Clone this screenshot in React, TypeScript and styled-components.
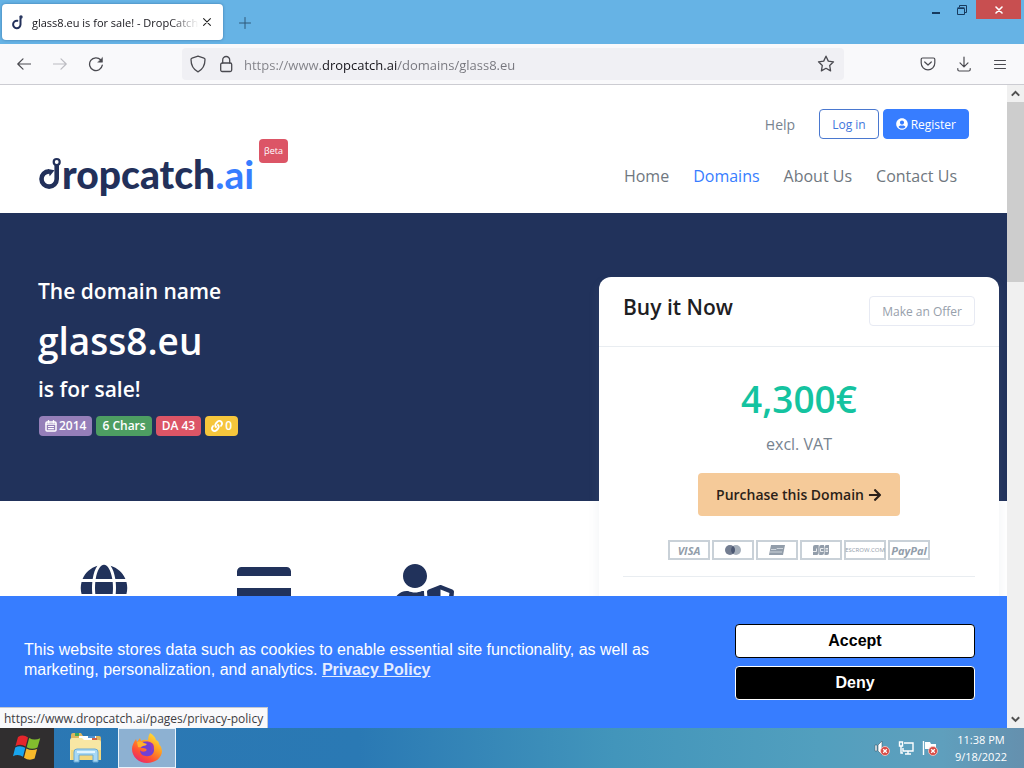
import React from "react";
import styled, { createGlobalStyle } from "styled-components";
import { FaArrowRight, FaCreditCard, FaGlobe, FaLink, FaUserCircle, FaUserShield } from "react-icons/fa";

const GlobalStyle = createGlobalStyle`
  * { box-sizing: border-box; }
  body { margin: 0; font-family: "Open Sans", "Noto Sans", sans-serif; }
  button, input { font: inherit; margin: 0; }
  h1, h2, p { margin: 0; }
`;

const Shell = styled.div`
  display: flex;
  flex-direction: column;
  height: 100vh;
  overflow: hidden;
  background: #fff;
`;

/* ---------- browser chrome ---------- */

const TitleBar = styled.div`
  display: flex;
  align-items: flex-start;
  flex: none;
  height: 44px;
  background: #66b3e5;
`;

const Tab = styled.div`
  display: flex;
  align-items: center;
  width: 221px;
  height: 36px;
  margin: 4px 0 0 2px;
  padding: 0 8px 0 9px;
  border-radius: 4px;
  background: #fff;
  box-shadow: 0 0 3px rgba(0, 40, 90, 0.4);
`;

const TabTitle = styled.span`
  flex: 1;
  min-width: 0;
  margin-left: 7px;
  overflow: hidden;
  white-space: nowrap;
  font-size: 11px;
  color: #15141a;
  mask-image: linear-gradient(90deg, #000 82%, transparent);
`;

const IconButton = styled.button<{ $w?: number; $h?: number; $color?: string }>`
  display: flex;
  align-items: center;
  justify-content: center;
  flex: none;
  width: ${(p) => p.$w ?? 36}px;
  height: ${(p) => p.$h ?? 40}px;
  padding: 0;
  border: 0;
  background: none;
  color: ${(p) => p.$color ?? "#4a4a50"};
`;

const NewTab = styled(IconButton)`
  margin-top: 3px;
`;

const WindowControls = styled.div`
  display: flex;
  margin-left: auto;
  padding-right: 3px;
`;

const CloseWindow = styled(IconButton)`
  margin-left: 1px;
  background: #c84f50;
`;

const Toolbar = styled.div`
  display: flex;
  align-items: center;
  flex: none;
  height: 41px;
  padding: 0 6px;
  border-bottom: 1px solid #ccccd2;
  background: #f9f9fb;
`;

const AddressBar = styled.label`
  display: flex;
  align-items: center;
  flex: 1;
  max-width: 662px;
  height: 32px;
  margin: 0 auto 0 68px;
  padding: 0 8px;
  border-radius: 4px;
  background: #f0f0f4;
  color: #4a4a50;
`;

const AddressInput = styled.input`
  flex: 1;
  min-width: 0;
  margin-left: 8px;
  padding: 2px 0 0;
  border: 0;
  outline: 0;
  font-size: 13px;
  color: #75757c;
  background: linear-gradient(90deg, #808086 77px, #15141a 77px, #15141a 153px, #75757c 153px);
  background-clip: text;
  -webkit-background-clip: text;
  -webkit-text-fill-color: transparent;
`;

const Viewport = styled.div`
  display: flex;
  flex: 1;
  min-height: 0;
`;

const Page = styled.div`
  position: relative;
  flex: 1;
  min-width: 0;
  overflow: hidden;
  background: #fff;
`;

const ScrollTrack = styled.div`
  display: flex;
  flex-direction: column;
  justify-content: space-between;
  flex: none;
  width: 17px;
  background: #f0f0f0;
`;

const ScrollThumb = styled.div`
  height: 180px;
  margin-bottom: auto;
  background: #cdcdcd;
`;

/* ---------- site header ---------- */

const SiteHeader = styled.header`
  display: flex;
  justify-content: space-between;
  height: 128px;
  padding: 24px 38px 0;
`;

const Brand = styled.a`
  display: flex;
  align-items: flex-start;
  padding-top: 30px;
  text-decoration: none;
`;

const HookIcon = styled.svg`
  flex: none;
  margin-top: 18px;
`;

const Wordmark = styled.span`
  display: block;
  margin-top: 11px;
  font: 900 39px/48px Lato, "Open Sans", sans-serif;
  color: #22305a;
`;

const WordmarkSuffix = styled.span`
  font-weight: 700;
  color: #377dff;
`;

const BetaTag = styled.span`
  height: 24px;
  margin-left: 5px;
  padding: 0 5px;
  border-radius: 4px;
  background: #dc5566;
  color: #fff;
  font-size: 9px;
  line-height: 24px;
`;

const HeaderRight = styled.div`
  display: flex;
  flex-direction: column;
  align-items: flex-end;
`;

const AccountRow = styled.div`
  display: flex;
  align-items: center;
  gap: 4px;
`;

const HelpLink = styled.a`
  margin-right: 20px;
  color: #77838f;
  font-size: 14px;
  text-decoration: none;
`;

const SmallButton = styled.button<{ $tone: "outline" | "solid" | "muted" }>`
  display: flex;
  align-items: center;
  gap: 3px;
  height: 30px;
  padding: 0 12px;
  border: 1px solid ${(p) => (p.$tone === "muted" ? "#e7eaf3" : p.$tone === "solid" ? "#377dff" : "#4a78cf")};
  border-radius: 4px;
  background: ${(p) => (p.$tone === "solid" ? "#377dff" : "#fff")};
  color: ${(p) => (p.$tone === "solid" ? "#fff" : p.$tone === "muted" ? "#97a0ab" : "#3f76dc")};
  font-size: 12px;
  white-space: nowrap;
`;

const Nav = styled.nav`
  display: flex;
  gap: 24px;
  padding: 25px 12px 0 0;
`;

const NavLink = styled.a<{ $active?: boolean }>`
  color: ${(p) => (p.$active ? "#377dff" : "#6f7780")};
  font-size: 16px;
  line-height: 24px;
  text-decoration: none;
  white-space: nowrap;
`;

/* ---------- hero ---------- */

const Hero = styled.section`
  display: flex;
  justify-content: space-between;
  align-items: flex-start;
  height: 288px;
  padding: 64px 8px 0 38px;
  background: #21325b;
`;

const Pitch = styled.div`
  color: #fff;
  font-weight: 600;
`;

const PitchLine = styled.p`
  font-size: 21px;
  line-height: 28px;
`;

const DomainName = styled.h1`
  padding: 10px 0 9px;
  font-size: 37px;
  font-weight: 600;
  line-height: 51px;
`;

const Badges = styled.div`
  display: flex;
  gap: 4px;
  margin: 13px 0 0 1px;
`;

const Badge = styled.span<{ $bg: string }>`
  display: flex;
  align-items: center;
  gap: 2px;
  height: 20px;
  padding: 0 6px;
  border-radius: 4px;
  background: ${(p) => p.$bg};
  font-size: 12px;
  line-height: 18px;
  white-space: nowrap;
`;

const Card = styled.section`
  flex: none;
  width: 400px;
  border-radius: 12px;
  background: #fff;
  box-shadow: 0 6px 12px rgba(140, 152, 164, 0.12);
`;

const CardHead = styled.div`
  display: flex;
  justify-content: space-between;
  height: 70px;
  padding: 19px 24px 0;
  border-bottom: 1px solid #e9edf1;
`;

const CardTitle = styled.h2`
  color: #1e2022;
  font-size: 21px;
  font-weight: 600;
  line-height: 22px;
`;

const CardBody = styled.div`
  display: flex;
  flex-direction: column;
  align-items: center;
  height: 400px;
  padding: 26px 24px 0;
`;

const Price = styled.p`
  color: #14c3a0;
  font-size: 37px;
  font-weight: 600;
  line-height: 52px;
`;

const PriceNote = styled.p`
  margin-top: 7px;
  color: #77838f;
  font-size: 16px;
  line-height: 24px;
`;

const PurchaseButton = styled.button`
  display: flex;
  align-items: center;
  gap: 4px;
  height: 43px;
  margin-top: 17px;
  padding: 0 18px;
  border: 0;
  border-radius: 4px;
  background: #f5ca99;
  color: #2b1f18;
  font-size: 14px;
  font-weight: 600;
  white-space: nowrap;
`;

const PaymentRow = styled.div`
  display: flex;
  justify-content: center;
  gap: 2px;
  align-self: stretch;
  margin-top: 24px;
  padding-bottom: 16px;
  border-bottom: 1px solid #e9edf1;
`;

const PaymentMark = styled.span<{ $size?: number; $italic?: boolean; $light?: boolean }>`
  display: flex;
  align-items: center;
  justify-content: center;
  width: 42px;
  height: 20px;
  border: 2px solid #c9d1d8;
  color: #929daa;
  font-size: ${(p) => p.$size ?? 11}px;
  font-weight: ${(p) => (p.$light ? 400 : 700)};
  font-style: ${(p) => (p.$italic ? "italic" : "normal")};
`;

const Features = styled.section`
  display: grid;
  grid-template: 48px / repeat(3, 160px);
  place-items: center;
  padding: 63px 24px 0;
  color: #21325b;
`;

/* ---------- overlays ---------- */

const CookieBanner = styled.aside`
  position: absolute;
  right: 0;
  bottom: 0;
  left: 0;
  display: flex;
  align-items: center;
  justify-content: space-between;
  gap: 32px;
  height: 132px;
  padding: 0 32px 0 24px;
  background: #377dff;
  color: #fff;
  font: 16px/20px "Liberation Sans", Arial, sans-serif;
`;

const CookieText = styled.p`
  max-width: 648px;
  padding-bottom: 4px;
`;

const PolicyLink = styled.a`
  display: inline-block;
  color: #e4ecff;
  font-weight: 700;
`;

const CookieActions = styled.div`
  display: flex;
  flex-direction: column;
  flex: none;
  gap: 8px;
  width: 240px;
`;

const CookieButton = styled.button<{ $dark?: boolean }>`
  height: 34px;
  border: 1px solid ${(p) => (p.$dark ? "#fff" : "#000")};
  border-radius: 4px;
  background: ${(p) => (p.$dark ? "#000" : "#fff")};
  color: ${(p) => (p.$dark ? "#fff" : "#000")};
  font-weight: 700;
`;

const LinkStatus = styled.div`
  position: absolute;
  bottom: 0;
  left: 0;
  height: 21px;
  padding: 0 4px;
  border-top: 1px solid #c4c8d0;
  border-right: 1px solid #c4c8d0;
  background: #f9f9fb;
  color: #3c3c42;
  font-size: 12px;
  line-height: 21px;
  white-space: nowrap;
`;

/* ---------- taskbar ---------- */

const Taskbar = styled.footer`
  display: flex;
  align-items: stretch;
  flex: none;
  height: 40px;
  background: linear-gradient(90deg, #2b77b3 0%, #2a79b4 35%, #4295bb 60%, #529fbe 80%, #5f9fbd 92%, #6590ae 100%);
`;

const TaskButton = styled.button<{ $kind?: "start" | "active" }>`
  display: flex;
  align-items: center;
  justify-content: center;
  width: ${(p) => (p.$kind === "start" ? 54 : p.$kind === "active" ? 58 : 64)}px;
  padding: 0;
  border: ${(p) => (p.$kind === "active" ? "1px solid #e8f3fb" : "0")};
  background: ${(p) => (p.$kind === "start" ? "#302e2f" : p.$kind === "active" ? "#8db1d2" : "none")};
`;

const Tray = styled.div`
  display: flex;
  align-items: center;
  gap: 8px;
  margin-left: auto;
  padding-right: 17px;
`;

const Clock = styled.time`
  margin-left: 9px;
  color: #fff;
  font-size: 11px;
  line-height: 17px;
  text-align: center;
`;

const stroke = { fill: "none", stroke: "currentColor", strokeLinecap: "round", strokeLinejoin: "round" } as const;

const Favicon = () => (
  <svg width="14" height="16" viewBox="0 0 14 16" {...stroke} stroke="#22305a" strokeWidth="2">
    <path d="M9.500 4.500v6a3.700 3.700 0 1 1-3.200-3.700" />
    <circle cx="10" cy="3" r="1" strokeWidth="1.4" />
  </svg>
);

const CalendarLines = () => (
  <svg width="12" height="12" viewBox="0 0 12 12" {...stroke} strokeWidth="1.5">
    <rect x="1" y="2" width="10" height="9" rx="1" />
    <path d="M3.5 .8v2M8.5 .8v2" />
    <path d="M1 4.2h10M3.5 6.5h5M3.5 8.7h5" strokeWidth="1.2" />
  </svg>
);

const Chevron = ({ down }: { down?: boolean }) => (
  <svg width="9" height="7" viewBox="0 0 9 7" fill="none" stroke="#505050" strokeWidth="2">
    <path d={down ? "M.8 1.2l3.7 3.7 3.7-3.7" : "M.8 5.6l3.7-3.7 3.7 3.7"} />
  </svg>
);

const WindowsLogo = () => (
  <svg width="28" height="26" viewBox="0 0 28 26">
    <path fill="#e5262b" d="M5 2q5-3 10 .4L12.600 11.400Q8 8.500 2.500 11z" />
    <path fill="#83bd2e" d="M16.200 3q5 3 11 .3L24.500 12.500q-5.500 2.600-10.800-.3z" />
    <path fill="#18a5ee" d="M2.200 12.500q5-2.600 10.100.3L10 21.700Q5 18.700 0 21.300z" />
    <path fill="#f8ba2b" d="M13.400 13.600q5.300 2.800 10.700.4L21.600 23.500q-5.400 2.600-10.600-.8z" />
  </svg>
);

const FolderIcon = () => (
  <svg width="34" height="32" viewBox="0 0 34 32">
    <path fill="#dcb560" d="M2 3q0-2 2-2h8l2 3h16q2 0 2 2v22H2z" />
    <path fill="#40a858" d="M6 1h4v3H6z" />
    <path fill="#fff" d="M10 4h17v5H10z" />
    <path fill="#4f91cf" d="M19 4h7v2h-7z" />
    <path fill="#cf6247" d="M23 6h5v2h-5z" />
    <path fill="#f8e7a4" d="M1 8q0-2 2-2h10l2 2h15q2 0 2 2v18H1z" />
    <path fill="#f2d77d" d="M2 18h30v10H2z" />
    <path fill="#a7d8f4" stroke="#6aaad5" d="M5 30V20q0-3 3-3h18q3 0 3 3v10h-5v-7H10v7z" />
    <path stroke="#e1f5ff" strokeWidth="2" d="M8 20h18" />
  </svg>
);

const FirefoxIcon = () => (
  <svg width="32" height="32" viewBox="0 0 32 32">
    <defs>
      <linearGradient id="flame" x1="0.85" y1="0.05" x2="0.25" y2="1">
        <stop offset="0" stopColor="#ffe43b" />
        <stop offset="0.4" stopColor="#ff9b22" />
        <stop offset="0.72" stopColor="#ff5035" />
        <stop offset="1" stopColor="#e82770" />
      </linearGradient>
    </defs>
    <path
      fill="url(#flame)"
      d="M19 1q5 3 6 7 3 1 3 4 3 3 3 7c0 7-7 12-15 12S1 25 1 17c0-4 2-7 4-10l1 3 3-4 1 3q3-2 7-1 0-4 2-7z"
    />
    <path fill="#7040d5" d="M11 10c7-2 12 2 12 8 0 4-4 7-8 6-4 0-6-3-6-6 1 2 4 2 6 1 2-2-1-3-4-3-1 0-2-2 1-3z" />
    <path fill="#9d36b9" d="M15 10c6 1 7 7 4 11 3-2 5-6 3-9-2-2-5-3-7-2z" />
    <path fill="#ffb12d" d="M6 10q4-2 7 1l3 1q-1 2-4 2-3 2-5 1z" />
  </svg>
);

const ErrorDot = () => (
  <g>
    <circle cx="11" cy="11" r="4.500" fill="#d94b45" stroke="#f4d3d0" strokeWidth=".8" />
    <path d="M9.200 9.200l3.600 3.600M12.800 9.200l-3.600 3.600" stroke="#fff" strokeWidth="1.300" />
  </g>
);

export default function App() {
  return (
    <Shell>
      <GlobalStyle />
      <TitleBar>
        <Tab>
          <Favicon />
          <TabTitle>glass8.eu is for sale! - DropCatch</TabTitle>
          <IconButton $w={16} $h={24} $color="#222" aria-label="Close tab">
            <svg width="8" height="8" viewBox="0 0 8 8" {...stroke} strokeWidth="1.1">
              <path d="M.6 .6l6.800 6.800M7.400 .6L.6 7.400" />
            </svg>
          </IconButton>
        </Tab>
        <NewTab $w={44} $color="#2e5878" aria-label="New tab">
          <svg width="12" height="12" viewBox="0 0 12 12" {...stroke}>
            <path d="M6 .5v11M.5 6h11" />
          </svg>
        </NewTab>
        <WindowControls>
          <IconButton $w={26} $h={19} aria-label="Minimize">
            <svg width="8" height="12" viewBox="0 0 8 12">
              <path fill="#173a5e" d="M0 8h8v2H0z" />
            </svg>
          </IconButton>
          <IconButton $w={26} $h={19} aria-label="Restore">
            <svg width="10" height="10" viewBox="0 0 10 10" fill="none" stroke="#173a5e">
              <path d="M2.500 2V.500h7v7H8" />
              <path d="M.5 3.500h7v6h-7zM.5 2.800h7" />
            </svg>
          </IconButton>
          <CloseWindow $w={45} $h={19} $color="#fff" aria-label="Close window">
            <svg width="8" height="8" viewBox="0 0 8 8" {...stroke} strokeWidth="1.6">
              <path d="M1 1l6 6M7 1L1 7" />
            </svg>
          </CloseWindow>
        </WindowControls>
      </TitleBar>

      <Toolbar>
        <IconButton aria-label="Back">
          <svg width="14" height="12" viewBox="0 0 14 12" {...stroke} strokeWidth="1.2">
            <path d="M13.500 6H.8M6 .8L.8 6 6 11.200" />
          </svg>
        </IconButton>
        <IconButton $color="#bcbcc2" aria-label="Forward">
          <svg width="14" height="12" viewBox="0 0 14 12" {...stroke} strokeWidth="1.2">
            <path d="M.5 6h12.700M8 .8L13.200 6 8 11.200" />
          </svg>
        </IconButton>
        <IconButton aria-label="Reload">
          <svg width="16" height="16" viewBox="0 0 16 16" {...stroke} strokeWidth="1.3">
            <path d="M14.300 9.200A6.400 6.400 0 1 1 12.800 4" />
            <path fill="currentColor" d="M14.500 1.700v4.500H10z" strokeWidth=".5" />
          </svg>
        </IconButton>
        <AddressBar>
          <svg width="16" height="18" viewBox="0 0 16 18" {...stroke} strokeWidth="1.3">
            <path d="M8 1.200l6 2q1 .3 1 1.300c0 6-2.500 10-7 12.300C3.500 14.500 1 10.500 1 4.500q0-1 1-1.300z" />
          </svg>
          <svg width="30" height="18" viewBox="-10 0 30 18" {...stroke} strokeWidth="1.3">
            <rect x="4.700" y="8" width="11" height="8.500" rx="1.500" />
            <path d="M6.700 8V5a3.500 3.500 0 0 1 7 0v3" />
          </svg>
          <AddressInput aria-label="Address" defaultValue="https://www.dropcatch.ai/domains/glass8.eu" />
          <svg width="20" height="18" viewBox="0 0 20 18" {...stroke} strokeWidth="1.3">
            <path d="M10 1.200l2.300 4.900 5.200.7-3.800 3.700.9 5.400L10 13.300l-4.600 2.600.9-5.400L2.500 6.800l5.200-.7z" />
          </svg>
        </AddressBar>
        <IconButton aria-label="Save to Pocket">
          <svg width="16" height="14" viewBox="0 0 16 14" {...stroke} strokeWidth="1.2">
            <path d="M2.500 1h11q1.300 0 1.300 1.300V6a6.800 6.800 0 0 1-13.600 0V2.300Q1.200 1 2.500 1z" />
            <path d="M4.700 5L8 8l3.300-3" />
          </svg>
        </IconButton>
        <IconButton aria-label="Downloads">
          <svg width="14" height="16" viewBox="0 0 14 16" {...stroke} strokeWidth="1.2">
            <path d="M7 1v9.500M3 6.800l4 4 4-4M.8 12.500v1q0 1.500 1.500 1.500h9.400q1.500 0 1.500-1.500v-1" />
          </svg>
        </IconButton>
        <IconButton aria-label="Menu">
          <svg width="12" height="11" viewBox="0 0 12 11" {...stroke}>
            <path d="M.5 1.500h11M.5 5.500h11M.5 9.500h11" />
          </svg>
        </IconButton>
      </Toolbar>

      <Viewport>
        <Page>
          <SiteHeader>
            <Brand href="#" aria-label="dropcatch.ai home">
              <HookIcon width="24" height="40" viewBox="0 0 24 40" fill="none" stroke="#22305a">
                <circle cx="18.700" cy="5" r="3" strokeWidth="2.200" />
                <path d="M18.700 8v14A7.600 7.600 0 1 1 11 14.400" strokeWidth="4.600" />
                <path d="M10 12l6.500 1.200-4.800 6z" fill="#22305a" stroke="none" />
              </HookIcon>
              <Wordmark>
                ropcatch<WordmarkSuffix>.ai</WordmarkSuffix>
              </Wordmark>
              <BetaTag>βeta</BetaTag>
            </Brand>
            <HeaderRight>
              <AccountRow>
                <HelpLink href="#">Help</HelpLink>
                <SmallButton $tone="outline">Log in</SmallButton>
                <SmallButton $tone="solid">
                  <FaUserCircle size={12} />
                  Register
                </SmallButton>
              </AccountRow>
              <Nav>
                <NavLink href="#">Home</NavLink>
                <NavLink href="#" $active>
                  Domains
                </NavLink>
                <NavLink href="#">About Us</NavLink>
                <NavLink href="#">Contact Us</NavLink>
              </Nav>
            </HeaderRight>
          </SiteHeader>

          <Hero>
            <Pitch>
              <PitchLine>The domain name</PitchLine>
              <DomainName>glass8.eu</DomainName>
              <PitchLine>is for sale!</PitchLine>
              <Badges>
                <Badge $bg="#957fb9">
                  <CalendarLines />
                  2014
                </Badge>
                <Badge $bg="#4d9e62">6 Chars</Badge>
                <Badge $bg="#dc5566">DA 43</Badge>
                <Badge $bg="#f6c63c">
                  <FaLink size={12} />0
                </Badge>
              </Badges>
            </Pitch>
            <Card>
              <CardHead>
                <CardTitle>Buy it Now</CardTitle>
                <SmallButton $tone="muted">Make an Offer</SmallButton>
              </CardHead>
              <CardBody>
                <Price>4,300€</Price>
                <PriceNote>excl. VAT</PriceNote>
                <PurchaseButton>
                  Purchase this Domain
                  <FaArrowRight size={14} />
                </PurchaseButton>
                <PaymentRow>
                  <PaymentMark $italic>VISA</PaymentMark>
                  <PaymentMark>
                    <svg width="18" height="12" viewBox="0 0 18 12">
                      <circle cx="12" cy="6" r="5" fill="#a5afbb" />
                      <circle cx="6" cy="6" r="5" fill="#737d91" />
                      <path fill="#4c5873" d="M9 2a5 5 0 0 1 0 8 5 5 0 0 1 0-8z" />
                    </svg>
                  </PaymentMark>
                  <PaymentMark>
                    <svg width="18" height="12" viewBox="0 0 18 12">
                      <path fill="#929daa" d="M3 1h14l-2 10H1z" />
                      <path stroke="#dce1e6" d="M3 5.500h5l1-1h6M2 8h12" strokeWidth=".8" fill="none" />
                    </svg>
                  </PaymentMark>
                  <PaymentMark>
                    <svg width="18" height="12" viewBox="0 0 18 12">
                      <path fill="#929daa" d="M3 1h3.700v8q0 2-2 2H1V3q0-2 2-2zM9 1h3v8q0 2-2 2H7.200V3q0-2 1.800-2zM14.500 1H17v8q0 2-2 2h-2.500V3q0-2 2-2z" />
                      <path fill="none" stroke="#fff" strokeWidth=".8" d="M1 7.500h3.500V4.500M11.500 4.500H8.500v3h3M13.500 4.500h2.500M13.500 6h2.500M13.500 7.500h2.500" />
                    </svg>
                  </PaymentMark>
                  <PaymentMark $size={6} $light>
                    ESCROW.COM
                  </PaymentMark>
                  <PaymentMark $size={11} $italic>
                    PayPal
                  </PaymentMark>
                </PaymentRow>
              </CardBody>
            </Card>
          </Hero>

          <Features>
            <FaGlobe size={48} />
            <FaCreditCard size={54} />
            <FaUserShield size={60} />
          </Features>

          <CookieBanner>
            <CookieText>
              This website stores data such as cookies to enable essential site functionality, as well as marketing,
              personalization, and analytics. <PolicyLink href="#">Privacy Policy</PolicyLink>
            </CookieText>
            <CookieActions>
              <CookieButton>Accept</CookieButton>
              <CookieButton $dark>Deny</CookieButton>
            </CookieActions>
          </CookieBanner>
          <LinkStatus>https://www.dropcatch.ai/pages/privacy-policy</LinkStatus>
        </Page>
        <ScrollTrack>
          <IconButton $w={17} $h={17} aria-label="Scroll up">
            <Chevron />
          </IconButton>
          <ScrollThumb />
          <IconButton $w={17} $h={17} aria-label="Scroll down">
            <Chevron down />
          </IconButton>
        </ScrollTrack>
      </Viewport>

      <Taskbar>
        <TaskButton $kind="start" aria-label="Start">
          <WindowsLogo />
        </TaskButton>
        <TaskButton aria-label="File Explorer">
          <FolderIcon />
        </TaskButton>
        <TaskButton $kind="active" aria-label="Firefox">
          <FirefoxIcon />
        </TaskButton>
        <Tray>
          <svg width="16" height="16" viewBox="0 0 16 16">
            <path fill="#fff" stroke="#405b6b" strokeWidth=".6" d="M1 5h2v6H1zM4 5l4-4v14l-4-4z" />
            <ErrorDot />
          </svg>
          <svg width="16" height="16" viewBox="0 0 16 16" fill="none" stroke="#fff" strokeWidth="1.4">
            <path d="M6 3h9v8H5V8M10 11v3M7 14h6" />
            <path d="M1.500 2h3v4h-3zM3 6v7h2" />
          </svg>
          <svg width="16" height="16" viewBox="0 0 16 16">
            <path stroke="#fff" strokeWidth="1.4" d="M1.500 1v14" />
            <path fill="#fff" d="M3 2h5l1 2h5v6H8L7 9H3z" />
            <ErrorDot />
          </svg>
          <Clock>
            11:38 PM
            <br />
            9/18/2022
          </Clock>
        </Tray>
      </Taskbar>
    </Shell>
  );
}
